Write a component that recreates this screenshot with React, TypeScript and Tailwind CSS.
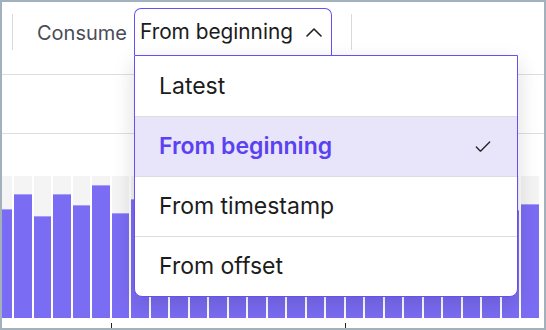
import { Check } from 'lucide-react';

const bars = [
  109, 124, 102, 124, 113, 133, 105, 119, 112, 126, 104, 118, 130, 108, 121, 115,
  110, 127, 103, 122, 116, 131, 107, 120, 111, 125, 108, 114,
];

const options = ['Latest', 'From beginning', 'From timestamp', 'From offset'];

function ChevronUp() {
  return (
    <svg width="16" height="10" viewBox="0 0 16 10" fill="none" className="ml-auto">
      <path d="M1 9 L8 2 L15 9" stroke="#1f1f1f" strokeWidth="1.6" strokeLinecap="round" strokeLinejoin="round" />
    </svg>
  );
}

export default function App() {
  return (
    <div
      className="h-[330px] w-[546px] overflow-hidden border-2 border-[#a3b1bd] bg-white"
      style={{ fontFamily: 'Inter, "Noto Sans", sans-serif' }}
    >
      <div className="flex h-full flex-col">
        {/* Toolbar */}
        <div className="flex h-[73px] shrink-0 items-start border-b border-[#dedede] pl-[10px] pt-[6px]">
          <div className="mt-[6px] h-[36px] w-px bg-[#d9d9d9]" />
          <span className="ml-[24px] mt-[13px] text-[20px] leading-[24px] text-[#4b4b57]">Consume</span>
          <div className="relative z-10 ml-[7px]">
            <div className="flex h-[47px] w-[198px] items-center rounded-t-[7px] border border-b-0 border-[#6451f5] bg-white pl-[5px] pr-[9px]">
              <span className="text-[20.8px] leading-[24px] text-[#1c1c1c]">From beginning</span>
              <ChevronUp />
            </div>
            <div className="absolute left-0 top-full w-[384px] overflow-hidden rounded-b-[8px] border border-[#6451f5] bg-white shadow-[0_8px_22px_rgba(0,0,0,0.14)]">
              {options.map((o, i) => {
                const active = o === 'From beginning';
                return (
                  <div
                    key={o}
                    className={
                      (i === 0 ? 'h-[60px] ' : 'h-[60px] border-t border-[#dcdce2] ') +
                      (active ? 'bg-[#e8e4fa] ' : '') +
                      'flex items-center pl-[24px] pr-[24px]'
                    }
                  >
                    <span
                      className={
                        active
                          ? 'text-[23px] font-semibold text-[#5a42f2]'
                          : 'text-[23px] text-[#1c1c1c]'
                      }
                    >
                      {o}
                    </span>
                    {active && <Check className="ml-auto h-[20px] w-[20px] text-[#222]" strokeWidth={1.6} />}
                  </div>
                );
              })}
            </div>
          </div>
          <div className="ml-[19px] mt-[6px] h-[36px] w-px bg-[#d9d9d9]" />
        </div>

        {/* Second row */}
        <div className="h-[59px] shrink-0 border-b border-[#dedede]" />
        <div className="h-[42px] shrink-0" />

        {/* Chart */}
        <div className="h-[142px] shrink-0 overflow-hidden">
          <div className="-ml-[7.5px] flex h-full gap-[2px]">
            {bars.map((h, i) => (
              <div key={i} className="flex h-full w-[17.5px] shrink-0 flex-col justify-end bg-[#f4f4f4]">
                <div className="border-t border-[#a79cf8] bg-[#7b6cf4]" style={{ height: h }} />
              </div>
            ))}
          </div>
        </div>
        <svg className="h-[10px] w-full shrink-0" viewBox="0 0 542 10">
          <line x1="109.5" y1="5" x2="109.5" y2="10" stroke="#222" strokeWidth="1" />
          <line x1="343.5" y1="5" x2="343.5" y2="10" stroke="#222" strokeWidth="1" />
        </svg>
      </div>
    </div>
  );
}
